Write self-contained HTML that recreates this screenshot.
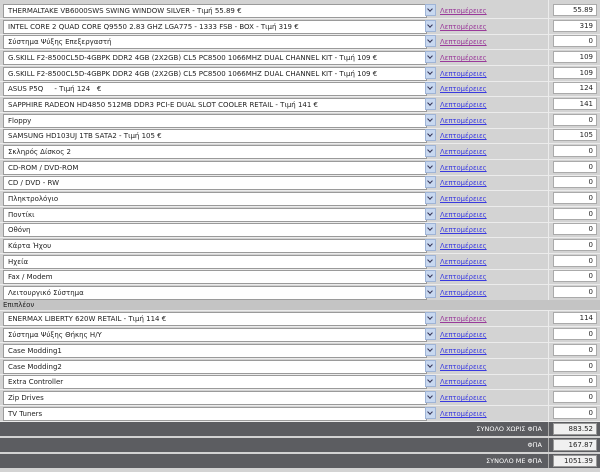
<!DOCTYPE html><html><head><meta charset="utf-8"><style>
body{margin:0;width:600px;height:472px;background:#d3d3d3;position:relative;overflow:hidden;font-family:"DejaVu Sans","Liberation Sans",sans-serif;font-size:7px;color:#222}
.r{position:absolute;left:0;width:600px;height:15px;border-bottom:1px solid #ececec}
.s{position:absolute;left:3px;top:1px;height:12px;background:#fff;border:1px solid #9a9a9a;line-height:12px;padding-left:4px;white-space:nowrap;overflow:hidden;box-sizing:content-box;width:418px}
.b{position:absolute;left:425px;top:1px;width:11px;height:12px;background:#c8d8f0;border:1px solid #9fb4d6;box-sizing:border-box}
.b:after{content:"";position:absolute;left:2px;top:2px;width:3px;height:3px;border-right:1.5px solid #335;border-bottom:1.5px solid #335;transform:rotate(45deg)}
.l{position:absolute;left:440px;top:4px;color:#3a3ae0;text-decoration:underline;font-size:6.8px}
.p{color:#9a3a9a}
.v{position:absolute;left:553px;top:1px;width:44px;height:12px;background:#fff;border:1px solid #aaa;box-sizing:border-box;text-align:right;padding-right:3px;line-height:11px;font-size:7px}
.vl{position:absolute;left:548px;top:0;width:1px;height:422px;background:#ececec}
.t{position:absolute;left:0;width:600px;height:14px;background:#5c5d61;color:#fff;font-size:6.5px}
.t span{position:absolute;right:58px;top:3px}
.t i{position:absolute;left:553px;top:1px;width:44px;height:12px;background:#f0f0f0;border:1px solid #999;box-sizing:border-box;text-align:right;padding-right:3px;font-style:normal;color:#222;line-height:11px;font-size:7px}
.t:before{content:"";position:absolute;left:548px;top:0;width:1px;height:14px;background:#aaa}
</style></head><body>
<div class="vl"></div>
<div class="r" style="top:3px"><div class="s">THERMALTAKE VB6000SWS SWING WINDOW SILVER - Τιμή 55.89 €</div><div class="b"></div><a class="l p">Λεπτομέρειες</a><div class="v">55.89</div></div>
<div class="r" style="top:19px"><div class="s">INTEL CORE 2 QUAD CORE Q9550 2.83 GHZ LGA775 - 1333 FSB - BOX - Τιμή 319 €</div><div class="b"></div><a class="l p">Λεπτομέρειες</a><div class="v">319</div></div>
<div class="r" style="top:34px"><div class="s">Σύστημα Ψύξης Επεξεργαστή</div><div class="b"></div><a class="l p">Λεπτομέρειες</a><div class="v">0</div></div>
<div class="r" style="top:50px"><div class="s">G.SKILL F2-8500CL5D-4GBPK DDR2 4GB (2X2GB) CL5 PC8500 1066MHZ DUAL CHANNEL KIT - Τιμή 109 €</div><div class="b"></div><a class="l p">Λεπτομέρειες</a><div class="v">109</div></div>
<div class="r" style="top:66px"><div class="s">G.SKILL F2-8500CL5D-4GBPK DDR2 4GB (2X2GB) CL5 PC8500 1066MHZ DUAL CHANNEL KIT - Τιμή 109 €</div><div class="b"></div><a class="l">Λεπτομέρειες</a><div class="v">109</div></div>
<div class="r" style="top:81px"><div class="s">ASUS P5Q &nbsp;&nbsp;&nbsp; - Τιμή 124 &nbsp; €</div><div class="b"></div><a class="l">Λεπτομέρειες</a><div class="v">124</div></div>
<div class="r" style="top:97px"><div class="s">SAPPHIRE RADEON HD4850 512MB DDR3 PCI-E DUAL SLOT COOLER RETAIL - Τιμή 141 €</div><div class="b"></div><a class="l">Λεπτομέρειες</a><div class="v">141</div></div>
<div class="r" style="top:113px"><div class="s">Floppy</div><div class="b"></div><a class="l">Λεπτομέρειες</a><div class="v">0</div></div>
<div class="r" style="top:128px"><div class="s">SAMSUNG HD103UJ 1TB SATA2 - Τιμή 105 €</div><div class="b"></div><a class="l">Λεπτομέρειες</a><div class="v">105</div></div>
<div class="r" style="top:144px"><div class="s">Σκληρός Δίσκος 2</div><div class="b"></div><a class="l">Λεπτομέρειες</a><div class="v">0</div></div>
<div class="r" style="top:160px"><div class="s">CD-ROM / DVD-ROM</div><div class="b"></div><a class="l">Λεπτομέρειες</a><div class="v">0</div></div>
<div class="r" style="top:175px"><div class="s">CD / DVD - RW</div><div class="b"></div><a class="l">Λεπτομέρειες</a><div class="v">0</div></div>
<div class="r" style="top:191px"><div class="s">Πληκτρολόγιο</div><div class="b"></div><a class="l">Λεπτομέρειες</a><div class="v">0</div></div>
<div class="r" style="top:207px"><div class="s">Ποντίκι</div><div class="b"></div><a class="l">Λεπτομέρειες</a><div class="v">0</div></div>
<div class="r" style="top:222px"><div class="s">Οθόνη</div><div class="b"></div><a class="l">Λεπτομέρειες</a><div class="v">0</div></div>
<div class="r" style="top:238px"><div class="s">Κάρτα Ήχου</div><div class="b"></div><a class="l">Λεπτομέρειες</a><div class="v">0</div></div>
<div class="r" style="top:254px"><div class="s">Ηχεία</div><div class="b"></div><a class="l">Λεπτομέρειες</a><div class="v">0</div></div>
<div class="r" style="top:269px"><div class="s">Fax / Modem</div><div class="b"></div><a class="l">Λεπτομέρειες</a><div class="v">0</div></div>
<div class="r" style="top:285px"><div class="s">Λειτουργικό Σύστημα</div><div class="b"></div><a class="l">Λεπτομέρειες</a><div class="v">0</div></div>
<div class="r" style="top:300px;height:10px;background:#c4c4c4"><span style="position:absolute;left:3px;top:1px">Επιπλέον</span></div>
<div class="r" style="top:311px"><div class="s">ENERMAX LIBERTY 620W RETAIL - Τιμή 114 €</div><div class="b"></div><a class="l p">Λεπτομέρειες</a><div class="v">114</div></div>
<div class="r" style="top:327px"><div class="s">Σύστημα Ψύξης Θήκης Η/Υ</div><div class="b"></div><a class="l">Λεπτομέρειες</a><div class="v">0</div></div>
<div class="r" style="top:343px"><div class="s">Case Modding1</div><div class="b"></div><a class="l">Λεπτομέρειες</a><div class="v">0</div></div>
<div class="r" style="top:359px"><div class="s">Case Modding2</div><div class="b"></div><a class="l">Λεπτομέρειες</a><div class="v">0</div></div>
<div class="r" style="top:374px"><div class="s">Extra Controller</div><div class="b"></div><a class="l">Λεπτομέρειες</a><div class="v">0</div></div>
<div class="r" style="top:390px"><div class="s">Zip Drives</div><div class="b"></div><a class="l">Λεπτομέρειες</a><div class="v">0</div></div>
<div class="r" style="top:406px"><div class="s">TV Tuners</div><div class="b"></div><a class="l">Λεπτομέρειες</a><div class="v">0</div></div>
<div class="t" style="top:422px"><span>ΣΥΝΟΛΟ ΧΩΡΙΣ ΦΠΑ</span><i>883.52</i></div>
<div class="t" style="top:438px"><span>ΦΠΑ</span><i>167.87</i></div>
<div class="t" style="top:454px"><span>ΣΥΝΟΛΟ ΜΕ ΦΠΑ</span><i>1051.39</i></div>
</body></html>
